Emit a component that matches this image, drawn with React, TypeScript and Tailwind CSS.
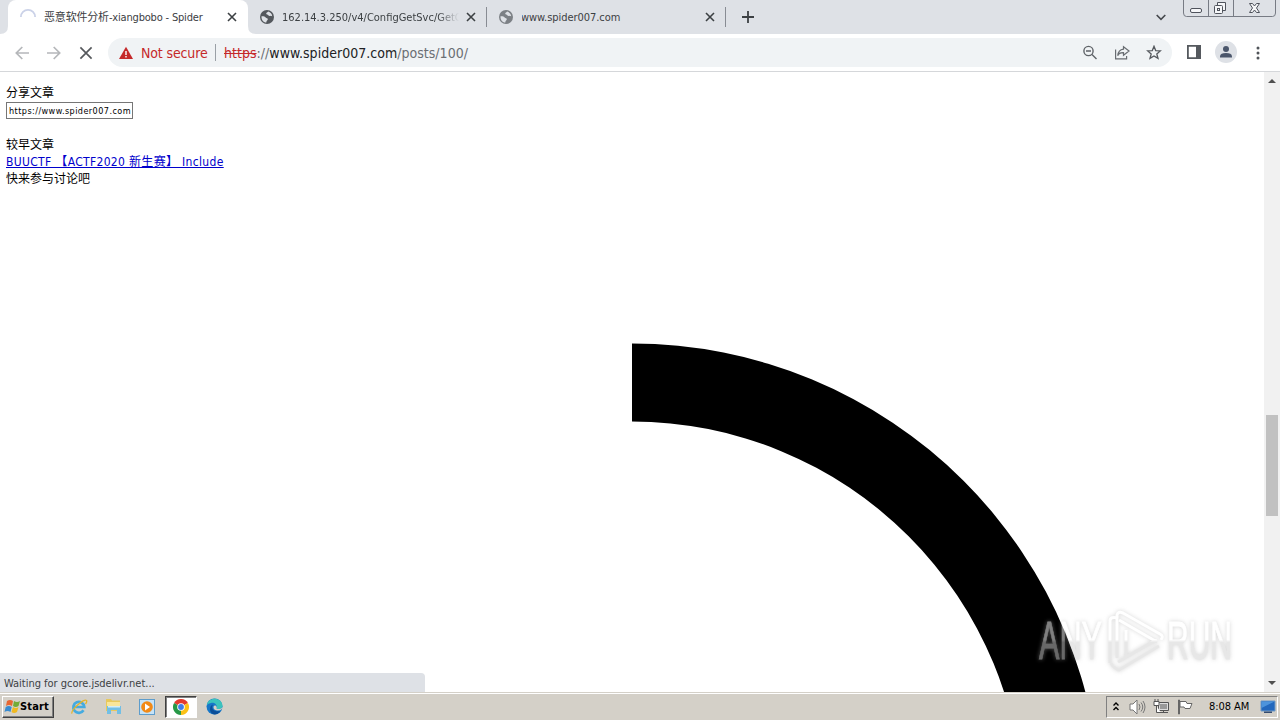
import type { ReactNode } from "react";

interface TabProps {
  title: string;
  icon: ReactNode;
  active?: boolean;
  titleClass: string;
}

function Cross({ size, width, color }: { size: number; width: number; color: string }) {
  return (
    <svg width={size} height={size} viewBox="0 0 10 10" fill="none" stroke={color} strokeWidth={width}>
      <path d="M1 1 9 9M9 1 1 9" />
    </svg>
  );
}

function Globe({ color }: { color: string }) {
  return (
    <svg width="16" height="16" viewBox="0 0 16 16">
      <circle cx="8" cy="8" r="7" fill={color} />
      <path d="M2.5 7.2c2.2-.2 3.3.3 4.2 1.3.7.8 2.1.5 2.1 1.7 0 1-1.5 1.3-1.5 3.4-3-.4-5-2.7-4.8-6.4Z" fill="#dee1e6" />
      <path d="M9.2 2.6c-.4 1-2.2 1.1-2 2.2.2 1 1.7.5 2.1 1.5.4.8 1.6 1 2.4.5l1.5.4c-.1-2.2-1.8-4-4-4.6Z" fill="#dee1e6" />
    </svg>
  );
}

function Spinner() {
  return (
    <svg width="16" height="16" viewBox="0 0 16 16" fill="none" stroke="#cbd2e8" strokeWidth="1.8">
      <path d="M.9 8A7.1 7.1 0 0 1 15.1 8" />
    </svg>
  );
}

function Tab({ title, icon, active, titleClass }: TabProps) {
  return (
    <div className={active ? "flex h-[34px] w-[240px] items-center rounded-t-lg bg-white pl-3 pr-[11px]" : "flex h-[34px] w-[238px] items-center pl-[11px] pr-[10px]"}>
      {icon}
      <span className={`ml-2 flex-1 overflow-hidden whitespace-nowrap text-[11px] leading-4 text-[#3c4043] ${titleClass}`}>{title}</span>
      <Cross size={10} width={1.6} color="#3c4043" />
    </div>
  );
}

function WindowButtons() {
  return (
    <svg className="absolute right-[3px] top-0" width="94" height="17" viewBox="0 0 94 17" fill="none" stroke="#777b84">
      <path d="M.5 0v13q0 3.500 3 3.500h86q3 0 3-3.500V0M25.500 0v16M50.500 0v16" />
      <g stroke="#4f535c">
        <rect x="7.500" y="8.500" width="11" height="4" rx="1.500" fill="#f5f6f8" />
        <path d="M34.500 5V2.500h8v8h-2.500" fill="#f5f6f8" />
        <rect x="31.500" y="5.500" width="8" height="8" rx="1" fill="#f5f6f8" />
        <rect x="34.500" y="8.500" width="2" height="2" />
        <path d="M66.500 3.500h3l2 2.500 2-2.500h3L73.500 8l3 4.500h-3l-2-2.500-2 2.500h-3l3-4.500Z" fill="#f5f6f8" />
      </g>
    </svg>
  );
}

function TabStrip() {
  return (
    <div className="relative flex h-[34px] items-center bg-[#dee1e6] pl-2">
      <Tab active title="恶意软件分析-xiangbobo - Spider" icon={<Spinner />} titleClass="pt-px tracking-[-0.18px]" />
      <Tab
        title="162.14.3.250/v4/ConfigGetSvc/GetC"
        icon={<Globe color="#54585d" />}
        titleClass="mr-[7px] -indent-px pt-px [mask-image:linear-gradient(to_right,black_88%,transparent)]"
      />
      <div className="h-5 w-px bg-[#888c93]" />
      <Tab title="www.spider007.com" icon={<Globe color="#7c8085" />} titleClass="-indent-px pt-px tracking-[-0.05px]" />
      <div className="h-5 w-px bg-[#888c93]" />
      <svg className="ml-4" width="12" height="12" viewBox="0 0 12 12" stroke="#3c4043" strokeWidth="1.8">
        <path d="M6 0v12M0 6h12" />
      </svg>
      <svg className="absolute left-[1156px] top-[14px]" width="10" height="7" viewBox="0 0 10 7" fill="none" stroke="#45484d" strokeWidth="1.6">
        <path d="m.7 1 4.300 4.300L9.300 1" />
      </svg>
      <svg className="absolute left-0 top-[26px]" width="8" height="8">
        <path d="M8 0v8H0q8 0 8-8Z" fill="#fff" />
      </svg>
      <svg className="absolute left-[248px] top-[26px]" width="8" height="8">
        <path d="M0 0v8h8Q0 8 0 0Z" fill="#fff" />
      </svg>
      <WindowButtons />
    </div>
  );
}

function Toolbar() {
  return (
    <div className="flex h-[38px] items-center border-b border-[#d5d7da] bg-white pl-[15px]">
      <svg width="14" height="14" viewBox="0 0 14 14" fill="none" stroke="#b5b7ba" strokeWidth="1.700">
        <path d="M14 7H1.500M7.300 1 1.300 7l6 6" />
      </svg>
      <svg className="ml-[18px]" width="14" height="14" viewBox="0 0 14 14" fill="none" stroke="#b5b7ba" strokeWidth="1.700">
        <path d="M0 7h12.500M6.700 1l6 6-6 6" />
      </svg>
      <div className="ml-[18px] flex">
        <Cross size={14} width={1.2} color="#55585c" />
      </div>
      <div className="ml-[15px] flex h-[29px] w-[1064px] items-center rounded-full bg-[#f0f3f5] pl-[11px]">
        <svg width="14" height="14" viewBox="0 0 14 14">
          <path d="M7 .8 14 13H0Z" fill="#c5292a" />
          <path d="M6.300 5h1.400v4H6.300Zm0 5h1.400v1.400H6.300Z" fill="#fff" />
        </svg>
        <span className="ml-2 w-[67px] whitespace-nowrap text-sm leading-5 tracking-[-0.14px] text-[#c5292a]">Not secure</span>
        <div className="ml-[7px] h-[17px] w-px bg-[#9aa0a6]" />
        <span className="ml-2 w-[245px] whitespace-nowrap text-sm leading-5 tracking-[0.02px] text-[#6a6e73]">
          <span className="text-[#c5292a] line-through">https</span>://<span className="text-[#202124]">www.spider007.com</span>/posts/100/
        </span>
        <div className="ml-auto mr-[10px] flex items-center gap-4">
          <svg width="16" height="16" viewBox="0 0 16 16" fill="none" stroke="#5f6368" strokeWidth="1.400">
            <circle cx="6.500" cy="6" r="4.600" />
            <path d="m10 9.500 4.500 4.500M4 6h5" />
          </svg>
          <svg width="16" height="16" viewBox="0 0 16 16" fill="none" stroke="#686c71" strokeWidth="1.200">
            <path d="M1.600 4.500v9.400h11V11M9.500 1.700 15 6 9.500 10.200V7.700Q5 7.500 3.700 10.800 4.200 4.800 9.500 4.100Z" />
          </svg>
          <svg width="16" height="16" viewBox="0 0 16 16" fill="none" stroke="#55595e" strokeWidth="1.300">
            <path d="m8 1.300 1.700 4.300 4.600.3-3.500 3 1.200 4.500L8 10.900 4 13.400l1.200-4.500-3.500-3 4.600-.3Z" />
          </svg>
        </div>
      </div>
      <svg className="-mt-px ml-[15px]" width="14" height="14" viewBox="0 0 14 14">
        <path d="M0 0h14v14H0Zm1.800 1.800v10.400H9V1.800Z" fill="#55595e" />
      </svg>
      <svg className="-mt-px ml-[14px]" width="22" height="22" viewBox="0 0 22 22">
        <circle cx="11" cy="11" r="11" fill="#dee1e6" />
        <circle cx="11" cy="8" r="3" fill="#4b566b" />
        <path d="M5 16.500v-1.300Q5.400 12 11 12t6 3.200v1.300Z" fill="#4b566b" />
      </svg>
      <svg className="ml-[19px]" width="4" height="14" viewBox="0 0 4 14" fill="#505459">
        <circle cx="2" cy="2" r="1.500" />
        <circle cx="2" cy="7" r="1.500" />
        <circle cx="2" cy="12" r="1.500" />
      </svg>
    </div>
  );
}

function Watermark() {
  return (
    <svg
      className="absolute left-[1036px] top-[534px] opacity-50 drop-shadow-[0_0_2px_#aaa]"
      width="204"
      height="70"
      viewBox="-2 -2 204 70"
      fill="none"
    >
      <defs>
        <linearGradient id="fade" gradientUnits="userSpaceOnUse" x1="0" y1="0" x2="0" y2="66">
          <stop offset="0.48" stopColor="#ffffff" />
          <stop offset="0.52" stopColor="#d0d0d0" />
        </linearGradient>
      </defs>
      <g fill="url(#fade)" stroke="url(#fade)" strokeWidth=".8" fontFamily="Liberation Sans Narrow, Liberation Sans" fontSize="53">
        <text x="1" y="51" textLength="63" lengthAdjust="spacingAndGlyphs">ANY</text>
        <text x="129" y="51" textLength="65" lengthAdjust="spacingAndGlyphs">RUN</text>
      </g>
      <g stroke="url(#fade)" strokeWidth="3" strokeLinejoin="round">
        <path d="M80 10q-8-2-8 3v42" />
        <path d="M79 50V7q1-4 6-2l37 21q4 2 1 6" />
        <path d="M81 12l38 22M88 22v27l31-17" />
        <path d="M73 55q2 5 8 7l40-24M80 54l36-21" />
      </g>
    </svg>
  );
}

function Page() {
  return (
    <div className="relative flex h-[620px] overflow-hidden bg-white">
      <main className="flex-1 pl-[6px] pt-[13px] text-xs leading-[17px] text-black">
        <div>分享文章</div>
        <div className="h-[17px] w-[127px] overflow-hidden whitespace-nowrap border border-[#767676] pl-[2px] text-[9px] leading-[16px] tracking-[0.44px]">
          https://www.spider007.com
        </div>
        <div className="mt-[18px]">较早文章</div>
        <div>
          <a className="whitespace-pre tracking-[0.33px] text-[#0000cc] underline">BUUCTF 【ACTF2020 新生赛】 Include</a>
        </div>
        <div>快来参与讨论吧</div>
      </main>
      <svg className="absolute left-[632px] top-[271px]" width="480" height="349" viewBox="0 0 480 349">
        <path d="M0 .6A469.200 469.200 0 0 1 469.200 469.800H391.200A391.200 391.200 0 0 0 0 78.600Z" />
      </svg>
      <Watermark />
      <div className="absolute bottom-0 left-0 h-[19px] w-[425px] rounded-tr-[4px] bg-[#dee1e6] pl-1 text-[11px] leading-[21px] tracking-[-0.02px] text-[#3c4043]">
        Waiting for gcore.jsdelivr.net...
      </div>
      <div className="flex w-4 flex-col items-center bg-[#f1f1f1] pb-[7px] pt-[7px]">
        <svg width="8" height="4" viewBox="0 0 8 4" fill="#505050">
          <path d="M0 4 4 0l4 4Z" />
        </svg>
        <div className="mt-[332px] h-[101px] w-3 bg-[#c1c1c1]" />
        <svg className="mt-auto" width="8" height="4" viewBox="0 0 8 4" fill="#505050">
          <path d="m0 0 4 4 4-4Z" />
        </svg>
      </div>
    </div>
  );
}

function ExplorerIcon() {
  return (
    <svg width="18" height="18" viewBox="0 0 18 18" fill="none">
      <path d="M13.500 12.300A5.500 5.500 0 1 1 14.300 9H4" stroke="#45abe0" strokeWidth="2.700" />
      <path d="M2.200 15.500C-.5 13 14.500-.5 16.500 2.500q.8 1-1 3.500" stroke="#e4b52b" strokeWidth="1.300" />
    </svg>
  );
}

function FolderIcon() {
  return (
    <svg width="17" height="17" viewBox="0 0 17 17">
      <path d="M1 1h5l1 1.500h8V13H1Z" fill="#e8c95c" />
      <path d="M2 4h13v7H2Z" fill="#f8e59a" />
      <path d="M2 8h14v8h-4v-4H6v4H2Z" fill="#72bfe5" />
      <path d="M3 8h12v1.500H3Z" fill="#d2edf8" />
    </svg>
  );
}

function PlayerIcon() {
  return (
    <svg width="16" height="16" viewBox="0 0 16 16">
      <rect x=".5" y=".5" width="15" height="15" fill="#c6e3f7" stroke="#5e9dcc" />
      <circle cx="8" cy="8" r="5.800" fill="#f28a16" />
      <path d="m6 4.500 5 3.500-5 3.500Z" fill="#fff" />
    </svg>
  );
}

function ChromeIcon() {
  return (
    <svg width="16" height="16" viewBox="0 0 16 16">
      <path d="M8 8 1.070 4A8 8 0 0 1 14.930 4Z" fill="#e33b2e" />
      <path d="M8 8 14.930 4A8 8 0 0 1 8 16Z" fill="#fbc116" />
      <path d="M8 8v8A8 8 0 0 1 1.070 4Z" fill="#279847" />
      <circle cx="8" cy="8" r="3.800" fill="#fff" />
      <circle cx="8" cy="8" r="2.900" fill="#3f7de8" />
    </svg>
  );
}

function EdgeIcon() {
  return (
    <svg width="17" height="17" viewBox="0 0 17 17">
      <circle cx="8.500" cy="8.500" r="8" fill="#1676c8" />
      <path d="M1 7C2-1.500 16-1.500 16.500 8c0 3-4 4-6 2.500C12 8 9 4 5 5Q2 5.500 1 7Z" fill="#3bc3bd" />
      <path d="M7 6.500c-2.500 4 1 8 7.500 6.500-2 3-5 3.700-7 3.300C3 15 3 7.500 7 6.500Z" fill="#0b4e98" />
      <path d="M7.500 8.500q-.5 3.500 3.500 4 3 .2 5-1.500l.5-2c-1 2.300-4.500 2.500-6 1.500Q11.500 8.500 9 7.300Z" fill="#d4d0c8" />
    </svg>
  );
}

function Taskbar() {
  return (
    <footer className="flex h-7 items-center border-t border-[#d4d0c8] bg-[#d4d0c8] pl-[2px] pr-[2px] shadow-[inset_0_1px_0_#fff]">
      <div className="flex h-[22px] w-[52px] items-center border border-b-[#404040] border-l-white border-r-[#404040] border-t-white pl-px shadow-[inset_-1px_-1px_0_#808080]">
        <svg width="17" height="16" viewBox="0 0 17 16">
          <path d="M3 2q3-2 6 0L8 7Q5 5 2 7Z" fill="#e86731" />
          <path d="M10 2q3 2 6 0l-1.500 5q-3 2-5.500 0Z" fill="#73ab37" />
          <path d="M1.700 8q3-2 6 0l-1.200 5q-3-2-6 0Z" fill="#388bd0" />
          <path d="M9 8q3 2 5.500 0L13 13q-3 2-5.500 0Z" fill="#f0b920" />
        </svg>
        <b className="-ml-px pt-px text-[11px] leading-4 tracking-[0.15px]">Start</b>
      </div>
      <div className="ml-4 flex items-center">
        <ExplorerIcon />
        <div className="ml-[17px] flex"><FolderIcon /></div>
        <div className="ml-[17px] flex"><PlayerIcon /></div>
        <div className="ml-[10px] flex h-[22px] w-[32px] items-center justify-center border border-b-white border-l-[#404040] border-r-white border-t-[#404040] bg-white shadow-[inset_1px_1px_0_#808080]">
          <ChromeIcon />
        </div>
        <div className="ml-[9px] flex"><EdgeIcon /></div>
      </div>
      <div className="ml-auto flex h-[22px] w-[172px] items-center border border-b-white border-l-[#808080] border-r-white border-t-[#808080] pl-[6px]">
        <svg width="6" height="9" viewBox="0 0 6 9" fill="none" stroke="#000" strokeWidth="1.400">
          <path d="m.5 3.500 2.500-2.500 2.500 2.500M.5 8 3 5.500 5.500 8" />
        </svg>
        <svg className="ml-[10px]" width="17" height="16" viewBox="0 0 17 16" fill="none" stroke="#777">
          <path d="M1 5h3l4-4v14l-4-4H1Z" fill="#fff" />
          <path d="M10 5q2 3 0 6M12 3.500q3.500 4.500 0 9M14 2q4 6 0 12" />
        </svg>
        <svg className="ml-[7px]" width="17" height="16" viewBox="0 0 17 16" fill="none" stroke="#555">
          <path d="M5.500 3.500h10v8h-10ZM8 13.500h7M10.500 12v2" fill="#ddd" />
          <path d="M7 5h7v5H7Z" fill="#999" stroke="none" />
          <path d="M1 2.500h5v4H1ZM2 0v2M5 0v2M3.500 7v6.500H8" fill="#fff" />
        </svg>
        <svg className="ml-[7px]" width="17" height="16" viewBox="0 0 17 16" stroke="#666">
          <path d="M1.500 1v14h1V1ZM3 2.500h6l1 2h5l-2 5H8L7 8H3Z" fill="#fff" />
        </svg>
        <span className="ml-[15px] w-[42px] whitespace-nowrap pt-px text-[11px] leading-4 tracking-[-0.05px] text-black">8:08 AM</span>
        <svg className="ml-[9px]" width="16" height="14" viewBox="0 0 16 14">
          <path d="M1 1h14v10H1Z" fill="#2368bd" stroke="#7199c3" />
          <path d="M1.500 1.500h13L1.500 8Z" fill="#4d94dc" />
          <path d="M4 11.500h8V13H4Z" fill="#334b70" />
        </svg>
      </div>
    </footer>
  );
}

export default function App() {
  return (
    <div className="h-[720px] w-[1280px] overflow-hidden bg-white font-['DejaVu_Sans_Condensed','DejaVu_Sans','Noto_Sans_CJK_SC',sans-serif]">
      <TabStrip />
      <Toolbar />
      <Page />
      <Taskbar />
    </div>
  );
}
